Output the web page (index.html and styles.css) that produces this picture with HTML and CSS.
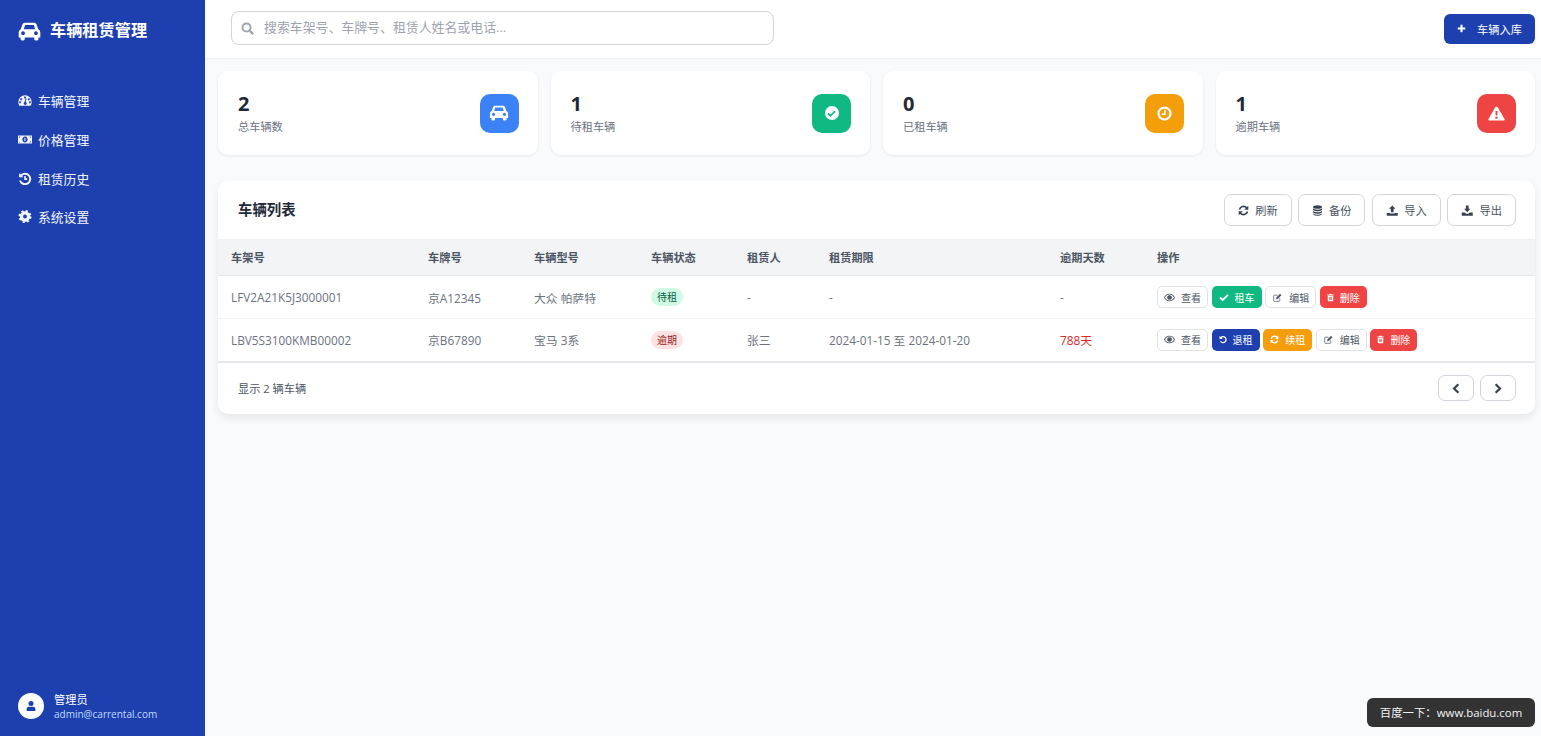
FILE: index.html
```html
<!DOCTYPE html>
<html lang="zh-CN">
<head>
<meta charset="utf-8">
<title>车辆租赁管理</title>
<link rel="stylesheet" href="styles.css">
</head>
<body>
<svg class="defs" aria-hidden="true">
  <symbol id="i-car" viewBox="0 0 24 20"><path fill="currentColor" fill-rule="evenodd" d="M4.6 2.4Q5.2 .8 7 .8H17Q18.8 .8 19.4 2.4L21.2 7.6Q23.4 8.6 23.4 11V16.2H21.4V18Q21.4 19.4 20 19.4H18.4Q17 19.4 17 18V16.2H7V18Q7 19.4 5.6 19.4H4Q2.6 19.4 2.6 18V16.2H.6V11Q.6 8.6 2.8 7.6ZM7.4 3.2 6 7.6H18L16.6 3.2ZM5.2 9.8a2 2 0 1 0 .01 0ZM18.8 9.8a2 2 0 1 0 .01 0Z"/></symbol>
  <symbol id="i-gauge" viewBox="0 0 24 20"><path fill="currentColor" fill-rule="evenodd" d="M12 1A11.5 11.5 0 0 0 .5 12.500C.5 15 1.2 17 2.4 19H21.6C22.8 17 23.5 15 23.5 12.500A11.5 11.5 0 0 0 12 1ZM12 3.2a1.7 1.7 0 1 1-.01 0ZM5.5 6a1.7 1.7 0 1 1-.01 0ZM18.5 6a1.7 1.7 0 1 1-.01 0ZM3.5 11.2a1.7 1.7 0 1 1-.01 0ZM20.5 11.2a1.7 1.7 0 1 1-.01 0ZM14.6 6.8 13.2 12.4a2.6 2.6 0 1 1-2 .1L13 6.4Z"/></symbol>
  <symbol id="i-money" viewBox="0 0 24 16"><path fill="currentColor" fill-rule="evenodd" d="M0 1H24V15H0ZM2 3V13H4A2 2 0 0 1 2 11V5A2 2 0 0 0 4 3ZM20 3A2 2 0 0 0 22 5V11A2 2 0 0 0 20 13H22V3ZM12 3a4.5 5 0 1 0 .01 0ZM11 5.500H12.8V10.5H11Z"/></symbol>
  <symbol id="i-history" viewBox="0 0 20 20"><g fill="none" stroke="currentColor" stroke-width="3"><path d="M4 5.500A8 8 0 1 1 2.4 13"/><path d="M10 6V11H13.5" stroke-width="2.400"/></g><path fill="currentColor" d="M1 1.500 7.500 8H1Z"/></symbol>
  <symbol id="i-cog" viewBox="0 0 20 20"><circle cx="10" cy="10" r="5.500" fill="none" stroke="currentColor" stroke-width="5"/><circle cx="10" cy="10" r="8.500" fill="none" stroke="currentColor" stroke-width="3" stroke-dasharray="3.340 3.340"/></symbol>
  <symbol id="i-user" viewBox="0 0 16 18"><circle cx="8" cy="4.800" r="4" fill="currentColor"/><path fill="currentColor" d="M1 17V13.500Q1 10 4.500 10H11.5Q15 10 15 13.500V17Z"/></symbol>
  <symbol id="i-search" viewBox="0 0 16 16"><circle cx="6.800" cy="6.800" r="5" fill="none" stroke="currentColor" stroke-width="2.400"/><path d="M10.6 10.6 15 15" stroke="currentColor" stroke-width="2.800"/></symbol>
  <symbol id="i-plus" viewBox="0 0 12 12"><path d="M6 1V11M1 6H11" stroke="currentColor" stroke-width="2.800"/></symbol>
  <symbol id="i-clock" viewBox="0 0 20 20"><circle cx="10" cy="10" r="8" fill="none" stroke="currentColor" stroke-width="3"/><path d="M10.5 5V11H6.500" fill="none" stroke="currentColor" stroke-width="2"/></symbol>
  <symbol id="i-warn" viewBox="0 0 20 18"><path fill="currentColor" fill-rule="evenodd" d="M10 .5Q11 .5 11.5 1.400L19.6 15.6Q20.4 17.5 18.4 17.5H1.600Q-.4 17.5 .4 15.6L8.500 1.400Q9 .5 10 .5ZM8.800 6 9 11.5H11L11.2 6ZM10 12.6a1.4 1.4 0 1 0 .01 0Z"/></symbol>
  <symbol id="i-refresh" viewBox="0 0 16 16"><g fill="none" stroke="currentColor" stroke-width="2.400"><path d="M2.200 6.600A6 6 0 0 1 12.6 4.200"/><path d="M13.8 9.400A6 6 0 0 1 3.400 11.8"/></g><path fill="currentColor" d="M15 1V7H9ZM1 15V9H7Z"/></symbol>
  <symbol id="i-db" viewBox="0 0 14 16"><g fill="currentColor"><ellipse cx="7" cy="3" rx="6.500" ry="2.600"/><path d="M.5 4.800Q3 7 7 7T13.5 4.800V7.200Q11 9.200 7 9.200T.5 7.200Z"/><path d="M.5 8.600Q3 10.6 7 10.6T13.5 8.600V10.8Q11 12.8 7 12.8T.5 10.8Z"/><path d="M.5 12.200Q3 14.2 7 14.2T13.5 12.200V13.4Q11 15.8 7 15.8T.5 13.4Z"/></g></symbol>
  <symbol id="i-upload" viewBox="0 0 16 16"><path fill="currentColor" d="M8 .8 12.6 5.600H10V10.5H6V5.600H3.400ZM0 11.5H4.600V12.4H11.4V11.5H16V15.5H0Z"/></symbol>
  <symbol id="i-download" viewBox="0 0 16 16"><path fill="currentColor" d="M6 .8H10V5.600H12.6L8 10.5 3.400 5.600H6ZM0 11H4.400L6.400 12.6H9.600L11.6 11H16V15.5H0Z"/></symbol>
  <symbol id="i-eye" viewBox="0 0 18 12"><path fill="currentColor" fill-rule="evenodd" d="M9 0C13 0 16.400 2.500 18 6 16.400 9.500 13 12 9 12S1.600 9.500 0 6C1.600 2.500 5 0 9 0ZM9 1.200C6 1.200 3.300 3 1.600 6 3.300 9 6 10.800 9 10.800S14.700 9 16.400 6C14.700 3 12 1.200 9 1.200ZM9 2.200a3.800 3.800 0 1 0 .01 0Z"/></symbol>
  <symbol id="i-check" viewBox="0 0 16 12"><path d="M1.500 6 6 10 14.500 1.800" fill="none" stroke="currentColor" stroke-width="3"/></symbol>
  <symbol id="i-edit" viewBox="0 0 16 16"><path fill="none" stroke="currentColor" stroke-width="1.300" d="M12 9.500V13.500Q12 14.800 10.800 14.800H2.600Q1.200 14.800 1.200 13.500V5.200Q1.200 3.900 2.600 3.900H8"/><path fill="currentColor" d="M6 8 12.500 1.500 15 4 8.500 10.500 5.500 11Z"/></symbol>
  <symbol id="i-trash" viewBox="0 0 14 16"><path fill="currentColor" fill-rule="evenodd" d="M4.500 2 5.500 .5H8.500L9.500 2H13.500V3.500H.5V2ZM1.500 4.500H12.500V14Q12.500 15.500 11 15.500H3Q1.500 15.500 1.500 14ZM4 6.500V13H5.200V6.500ZM6.400 6.500V13H7.600V6.500ZM8.800 6.500V13H10V6.500Z"/></symbol>
  <symbol id="i-undo" viewBox="0 0 16 16"><path fill="none" stroke="currentColor" stroke-width="2.600" d="M3.800 4A6 6 0 1 1 3 11.500"/><path fill="currentColor" d="M1 .8 7.500 7H1Z"/></symbol>
  <symbol id="i-left" viewBox="0 0 10 14"><path d="M8 1.500 2.500 7 8 12.500" fill="none" stroke="currentColor" stroke-width="2.800"/></symbol>
  <symbol id="i-right" viewBox="0 0 10 14"><path d="M2 1.500 7.500 7 2 12.500" fill="none" stroke="currentColor" stroke-width="2.800"/></symbol>
</svg>

<div class="app">
  <aside class="sidebar">
    <div class="brand">
      <svg class="brand-icon"><use href="#i-car"/></svg>
      <span class="brand-name">车辆租赁管理</span>
    </div>
    <nav class="nav">
      <a class="nav-item"><svg class="nav-icon"><use href="#i-gauge"/></svg>车辆管理</a>
      <a class="nav-item"><svg class="nav-icon"><use href="#i-money"/></svg>价格管理</a>
      <a class="nav-item"><svg class="nav-icon"><use href="#i-history"/></svg>租赁历史</a>
      <a class="nav-item"><svg class="nav-icon"><use href="#i-cog"/></svg>系统设置</a>
    </nav>
    <div class="account">
      <span class="avatar"><svg class="avatar-icon"><use href="#i-user"/></svg></span>
      <div class="account-text">
        <div class="account-name">管理员</div>
        <div class="account-mail">admin@carrental.com</div>
      </div>
    </div>
  </aside>

  <div class="main">
    <header class="topbar">
      <label class="search">
        <svg class="search-icon"><use href="#i-search"/></svg>
        <span class="search-hint">搜索车架号、车牌号、租赁人姓名或电话...</span>
      </label>
      <button class="btn-primary"><svg class="plus-icon"><use href="#i-plus"/></svg>车辆入库</button>
    </header>

    <section class="stats">
      <div class="stat">
        <div><div class="stat-value">2</div><div class="stat-label">总车辆数</div></div>
        <span class="stat-icon blue"><svg class="si-car"><use href="#i-car"/></svg></span>
      </div>
      <div class="stat">
        <div><div class="stat-value">1</div><div class="stat-label">待租车辆</div></div>
        <span class="stat-icon green"><span class="check-disc"><svg class="check-mark"><use href="#i-check"/></svg></span></span>
      </div>
      <div class="stat">
        <div><div class="stat-value">0</div><div class="stat-label">已租车辆</div></div>
        <span class="stat-icon amber"><svg class="si-round"><use href="#i-clock"/></svg></span>
      </div>
      <div class="stat">
        <div><div class="stat-value">1</div><div class="stat-label">逾期车辆</div></div>
        <span class="stat-icon red"><svg class="si-warn"><use href="#i-warn"/></svg></span>
      </div>
    </section>

    <section class="panel">
      <div class="panel-head">
        <h2 class="panel-title">车辆列表</h2>
        <div class="tools">
          <button class="tool"><svg class="tool-icon"><use href="#i-refresh"/></svg>刷新</button>
          <button class="tool"><svg class="tool-icon"><use href="#i-db"/></svg>备份</button>
          <button class="tool"><svg class="tool-icon wide"><use href="#i-upload"/></svg>导入</button>
          <button class="tool"><svg class="tool-icon wide"><use href="#i-download"/></svg>导出</button>
        </div>
      </div>
      <table class="grid">
        <thead>
          <tr><th>车架号</th><th>车牌号</th><th>车辆型号</th><th>车辆状态</th><th>租赁人</th><th>租赁期限</th><th>逾期天数</th><th>操作</th></tr>
        </thead>
        <tbody>
          <tr>
            <td>LFV2A21K5J3000001</td><td>京A12345</td><td>大众 帕萨特</td>
            <td><span class="badge ok">待租</span></td>
            <td>-</td><td>-</td><td>-</td>
            <td><div class="acts">
              <button class="act plain"><svg class="act-icon w11"><use href="#i-eye"/></svg>查看</button>
              <button class="act c-green"><svg class="act-icon w10"><use href="#i-check"/></svg>租车</button>
              <button class="act plain"><svg class="act-icon w11"><use href="#i-edit"/></svg>编辑</button>
              <button class="act c-red"><svg class="act-icon w7"><use href="#i-trash"/></svg>删除</button>
            </div></td>
          </tr>
          <tr>
            <td>LBV5S3100KMB00002</td><td>京B67890</td><td>宝马 3系</td>
            <td><span class="badge late">逾期</span></td>
            <td>张三</td><td>2024-01-15 至 2024-01-20</td><td class="overdue">788天</td>
            <td><div class="acts">
              <button class="act plain"><svg class="act-icon w11"><use href="#i-eye"/></svg>查看</button>
              <button class="act c-blue"><svg class="act-icon w8"><use href="#i-undo"/></svg>退租</button>
              <button class="act c-amber"><svg class="act-icon w9"><use href="#i-refresh"/></svg>续租</button>
              <button class="act plain"><svg class="act-icon w11"><use href="#i-edit"/></svg>编辑</button>
              <button class="act c-red"><svg class="act-icon w7"><use href="#i-trash"/></svg>删除</button>
            </div></td>
          </tr>
        </tbody>
      </table>
      <div class="panel-foot">
        <span class="count">显示 2 辆车辆</span>
        <div class="pager">
          <button class="page"><svg class="page-icon"><use href="#i-left"/></svg></button>
          <button class="page"><svg class="page-icon"><use href="#i-right"/></svg></button>
        </div>
      </div>
    </section>
  </div>
</div>
<div class="toast">百度一下：www.baidu.com</div>
</body>
</html>
```
FILE: styles.css
```css
* { box-sizing: border-box; }
html, body { margin: 0; height: 100%; }
body {
  font-family: "Open Sans", "Noto Sans CJK SC", sans-serif;
  background: #f9fafb;
  color: #1f2937;
  overflow: hidden;
}
button { font-family: inherit; cursor: pointer; }
svg { display: block; flex: none; }
.defs { position: absolute; width: 0; height: 0; }

.app { display: flex; height: 736px; }

.sidebar {
  width: 205px;
  flex: none;
  background: #1e40af;
  color: #fff;
  display: flex;
  flex-direction: column;
}
.brand { display: flex; align-items: flex-start; gap: 9px; padding: 20px 18px 0; height: 81.500px; }
.brand-icon { width: 23px; height: 19px; margin-top: 2px; }
.brand-name { font-size: 16.200px; font-weight: 700; line-height: 20px; }
.nav { display: flex; flex-direction: column; }
.nav-item {
  display: flex;
  align-items: center;
  gap: 6px;
  height: 38.700px;
  padding-left: 18px;
  font-size: 12.800px;
  color: #f3f6ff;
}
.nav-icon { width: 14px; height: 13px; }
.account { margin-top: auto; display: flex; align-items: flex-end; gap: 10px; padding: 0 18px 17px; }
.avatar { width: 26px; height: 26px; border-radius: 50%; background: #fff; color: #1e40af; display: flex; align-items: center; justify-content: center; }
.avatar-icon { width: 10px; height: 12px; }
.account-text { margin-bottom: -2px; }
.account-name { font-size: 11.200px; line-height: 14px; }
.account-mail { font-size: 10px; line-height: 14px; color: #bfdbfe; }

.main { flex: 1; min-width: 0; display: flex; flex-direction: column; }
.topbar {
  height: 58px;
  background: #fff;
  box-shadow: 0 1px 2px rgba(0, 0, 0, .05);
  display: flex;
  align-items: center;
  justify-content: space-between;
  padding: 0 6px 0 26px;
}
.search {
  width: 543px;
  height: 34px;
  border: 1px solid #d1d5db;
  border-radius: 8px;
  display: flex;
  align-items: center;
  gap: 10px;
  padding-left: 9px;
  margin-top: -1.500px;
}
.search-icon { width: 13px; height: 13px; color: #9ca3af; }
.search-hint { font-size: 12.900px; color: #9ca3af; margin-bottom: 3px; }
.btn-primary {
  width: 91px;
  height: 30px;
  margin-top: -1px;
  border: 0;
  border-radius: 6px;
  background: #1e40af;
  color: #fff;
  font-size: 11.200px;
  display: flex;
  align-items: center;
  justify-content: center;
  gap: 11px;
}
.plus-icon { width: 9px; height: 9px; }

.stats {
  display: grid;
  grid-template-columns: repeat(4, 1fr);
  gap: 13px;
  padding: 13px 6px 0 13px;
}
.stat {
  height: 84px;
  background: #fff;
  border-radius: 10px;
  box-shadow: 0 1px 3px rgba(0, 0, 0, .08);
  padding: 0 19px 0 20px;
  display: flex;
  align-items: center;
  justify-content: space-between;
}
.stat-value { font-size: 20px; font-weight: 700; line-height: 24px; color: #1f2937; margin-top: 1px; }
.stat-label { font-size: 11.200px; line-height: 18px; color: #6b7280; margin-top: 2px; }
.stat-icon { width: 39px; height: 39px; border-radius: 10px; color: #fff; display: flex; align-items: center; justify-content: center; }
.blue { background: #3b82f6; }
.green { background: #10b981; }
.amber { background: #f59e0b; }
.red { background: #ef4444; }
.si-car { width: 20px; height: 16px; }
.si-round { width: 15px; height: 15px; }
.si-warn { width: 17px; height: 15px; }
.check-disc { width: 14px; height: 14px; border-radius: 50%; background: #fff; color: #10b981; display: flex; align-items: center; justify-content: center; }
.check-mark { width: 9px; height: 7px; }

.panel {
  margin: 26px 6px 0 13px;
  background: #fff;
  border-radius: 10px;
  box-shadow: 0 4px 8px rgba(0, 0, 0, .08);
  overflow: hidden;
}
.panel-head { height: 58px; display: flex; align-items: center; justify-content: space-between; padding: 0 19px 0 20px; }
.panel-title { margin: 0 0 4px; font-size: 14.400px; font-weight: 700; color: #1f2937; }
.tools { display: flex; gap: 6.400px; }
.tool {
  height: 32px;
  padding: 0 13px;
  border: 1px solid #d1d5db;
  border-radius: 7px;
  background: #fff;
  color: #4b5563;
  font-size: 11.200px;
  display: flex;
  align-items: center;
  gap: 6px;
}
.tool-icon { width: 11px; height: 11px; color: #374151; }
.tool-icon.wide { width: 12.500px; }

.grid { width: 100%; border-collapse: collapse; table-layout: fixed; font-size: 11.800px; }
.grid th:nth-child(1) { width: 197px; }
.grid th:nth-child(2) { width: 106px; }
.grid th:nth-child(3) { width: 117px; }
.grid th:nth-child(4) { width: 96px; }
.grid th:nth-child(5) { width: 82px; }
.grid th:nth-child(6) { width: 231px; }
.grid th:nth-child(7) { width: 97px; }
.grid th {
  height: 36px;
  padding: 0 13px 2px;
  background: #f3f4f6;
  border-top: 1px solid #eef0f3;
  border-bottom: 1px solid #e5e7eb;
  text-align: left;
  font-size: 11.200px;
  font-weight: 600;
  color: #4b5563;
}
.grid td { height: 43px; padding: 0 13px; color: #6b7280; border-bottom: 1px solid #f3f4f6; }
.grid tbody tr:last-child td { border-bottom: 2px solid #e5e7eb; }
.grid td.overdue { color: #dc2626; }
.badge { display: inline-block; height: 18px; line-height: 18px; padding: 0 6px; border-radius: 9px; font-size: 10px; }
.ok { background: #d1fae5; color: #065f46; }
.late { background: #fee2e2; color: #991b1b; }
.acts { display: flex; gap: 3.600px; }
.act {
  height: 22.500px;
  padding: 0 6px;
  border: 1px solid transparent;
  border-radius: 5px;
  font-size: 10px;
  color: #fff;
  display: flex;
  align-items: center;
  gap: 6px;
}
.act-icon { height: 9px; }
.w7 { width: 7px; }
.w8 { width: 8px; }
.w9 { width: 9px; }
.w10 { width: 10px; }
.w11 { width: 11px; }
.plain { background: #fff; border-color: #dfe2e7; color: #4b5563; }
.c-green { background: #10b981; }
.c-red { background: #ef4444; }
.c-blue { background: #1e40af; }
.c-amber { background: #f59e0b; }

.panel-foot { height: 51px; display: flex; align-items: center; justify-content: space-between; padding: 0 19px 0 20px; }
.count { font-size: 11.200px; color: #4b5563; }
.pager { display: flex; gap: 6.400px; }
.page { width: 36px; height: 26px; border: 1px solid #d1d5db; border-radius: 7px; background: #fff; color: #374151; display: flex; align-items: center; justify-content: center; padding: 0; }
.page-icon { width: 8px; height: 11px; }

.toast {
  position: fixed;
  right: 6px;
  bottom: 9px;
  width: 168px;
  height: 29px;
  border-radius: 6px;
  background: #333;
  color: #f3f4f6;
  font-size: 11.400px;
  line-height: 29px;
  text-align: center;
}
```
